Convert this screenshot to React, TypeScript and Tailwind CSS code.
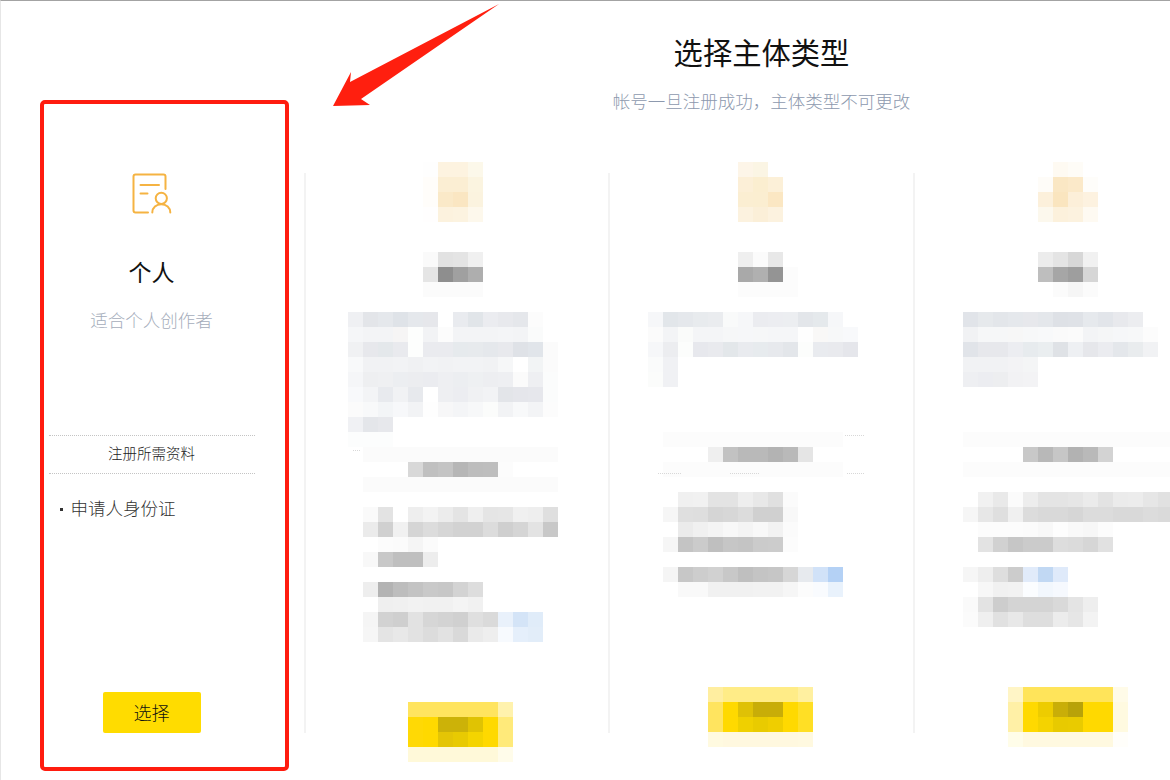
const FONT = "font-['Liberation_Sans','Noto_Sans_CJK_SC',sans-serif]";

// blurred patches, in page coordinates: [y, x, colours]
type Patch = [number, number, string];

const C1: Patch[] = [
  [162, 423, 'fefefe fdf3e0 fdf3e0 fcf8ea'],
  [177, 423, 'fffdfa fbeed3 fbeed3 fbf4e0'],
  [192, 423, 'fffdfa fae9c8 fae6c2 fbf3df'],
  [207, 423, 'fffefe fcf2de fcf3e0 fdf8ec'],
  [252, 423, 'fafafa e2e2e2 e4e4e4 f0f0f0'],
  [267, 423, 'e5e5e5 8e8e8e a0a0a0 aeaeae'],
  [282, 423, 'fbfbfb fbfbfb fbfbfb fbfbfb'],
  [312, 348, 'eff0f3 e3e5e9 e5e8ec dfe3e8 e5e8ec e6e7eb ffffff e9ebef e1e5e9 ebecf0 e8e9ed e5e7eb fcfcfc'],
  [327, 348, 'f5f6f8 f3f4f6 f3f4f6 f6f5f5 fdfefd f2f3f5 fcfcfc f3f4f6 f3f4f6 f3f4f6 f4f5f7 f3f4f6 fafbfb'],
  [342, 348, 'f0f1f3 e7e8ec e4e8eb e9eaee fdfefd eaebef eaebef e6eaed e7eaed e5e8ec e8e9ed dfe2e7 e1e5ea fbfbfb'],
  [357, 348, 'f8f9fa f1f2f4 f1f2f4 f2f3f5 f0f1f3 f2f3f5 f1f2f4 f2f3f5 f2f3f5 f1f2f4 f6f7f8 ffffff f2f4f5 fbfbfb'],
  [372, 348, 'f5f6f8 eeeff1 eff0f2 eceef1 ecedf0 ebecf0 eeeff2 eceef1 eef0f2 edeef1 eeeff2 fbfbfb eeeff2 fbfcfc'],
  [387, 348, 'f8f9fb f3f4f6 e8eaee f1f2f4 e7e9ed ffffff eeeff2 ecedf1 f0f1f3 f2f3f5 e3e5e9 e5e6eb e6e7ec fbfcfc'],
  [402, 348, 'fbfbfb f8f9fa f3f5f7 f7f8fa f2f3f5 fefefe f7f7f8 f4f5f7 f7f8f9 fbfcfb f2f3f5 f8f9fa f3f4f6 fcfcfc'],
  [417, 348, 'f0f1f4 e4e6ea e7e8ec'],
  [432, 348, 'fcfdfd fcfdfd fcfdfd'],
  [447, 363, 'fbfbfb fbfbfb fbfbfb fbfbfb fbfbfb fbfbfb fbfbfb fbfbfb fbfbfb fbfbfb fbfbfb fbfbfb fbfbfb'],
  [462, 408, 'd8d8d8 c0c0c0 c4c4c4 b6b6b6 bdbdbd bebebe fcfcfc'],
  [477, 363, 'fbfbfb fbfbfb fbfbfb fbfbfb fbfbfb fbfbfb fbfbfb fbfbfb fbfbfb fbfbfb fbfbfb fbfbfb fbfbfb'],
  [507, 363, 'fafafa e3e3e3 ffffff eeeeee f3f3f3 ececec e4e4e4 efefef e5e5e5 e6e6e6 f0f0f0 eeeeee dfdfdf'],
  [522, 363, 'ebebeb d0d0d0 f1f1f1 d5d5d5 dcdcdc d6d6d6 d2d2d2 d2d2d2 dcdcdc cfcfcf d5d5d5 e3e3e3 c8c8c8'],
  [537, 378, 'fcfcfc fbfbfb f5f5f5 fbfbfb'],
  [552, 363, 'f8f8f8 c8c8c8 bfbfbf bfbfbf ededed'],
  [582, 363, 'eeeeee b3b3b3 bdbdbd c3c3c3 c9c9c9 c7c7c7 d3d3d3 dddddd'],
  [597, 378, 'efefef f0f0f0 f2f2f2 f1f1f1 f1f1f1 f4f4f4 f1f1f1'],
  [612, 363, 'f5f5f5 d2d2d2 cfcfcf e2e2e2 d6d6d6 d3d3d3 d0d0d0 dfdfdf dadada e9f1fb d4e4f7 e0ecf9'],
  [627, 363, 'f6f6f6 e4e4e4 e8e8e8 e2e2e2 dcdcdc e2e2e2 d9d9d9 eaeaea eeeeee f7fafe e5effb e2edf9'],
  [702, 408, 'ffe45f ffe45f ffe45f ffe45f ffe45f ffe45f fff2ad'],
  [717, 408, 'ffd905 ffd900 ccb208 ccb208 e0c303 ffd900 ffea7a'],
  [732, 408, 'ffd905 ffd900 e4c505 e8ca02 f4d400 ffd900 ffea7a'],
  [747, 408, 'fff9d9 fff9d9 fff9d9 fff9d9 fff9d9 fff9d9 fffcea'],
];

const C2: Patch[] = [
  [162, 738, 'fdf5e8 fbf5e4'],
  [177, 738, 'fcefd7 fbeed0 fcf0d8'],
  [192, 738, 'fbeed2 fbeed1 fbe7c3'],
  [207, 738, 'fcf2df fbefd8 fcf2df'],
  [252, 738, 'efefef fbfbfb e8e8e8'],
  [267, 738, 'a9a9a9 b0b0b0 949494 fcfcfc'],
  [282, 738, 'fcfcfc fcfcfc fcfcfc fcfcfc'],
  [312, 648, 'f6f7f9 e2e6ea e5e8ec e8ebee eaecef f9fafa f6f7f9 ebecf0 ecedf1 eceef1 e3e6ea e5e9ec f6f7f9'],
  [327, 648, 'fbfbfb f3f4f6 fafbfa f4f5f7 f4f5f7 f6f7f8 f6f7f9 f6f7f8 f5f6f8 f5f6f8 fefefe f9f8f7 f7f8f9 f8f9fb'],
  [342, 648, 'f6f7f9 ecedf0 fcfdfc e7e8ed e9eaee e3e7ea e9ebef e7ebee e7e9ed e3e6ea fcfdfc e9ebef e9eaee e5e6eb'],
  [357, 648, 'fafbfb f0f1f4'],
  [372, 648, 'fbfcfb f0f1f4'],
  [432, 663, 'fcfcfc fcfcfc fcfcfc fcfcfc fcfcfc fcfcfc fcfcfc fcfcfc fcfcfc fcfcfc fcfcfc fcfcfc'],
  [447, 708, 'efefef c2c2c2 b9b9b9 b9b9b9 b3b3b3 b9b9b9 e5e5e5'],
  [462, 663, 'fcfcfc fcfcfc fcfcfc fcfcfc fcfcfc fcfcfc fcfcfc fcfcfc fcfcfc fcfcfc fcfcfc fcfcfc'],
  [492, 678, 'f0f0f0 f1f1f1 e3e3e3 e3e3e3 eeeeee e8e8e8 e0e0e0 fbfbfb'],
  [507, 663, 'f6f6f6 dfdfdf dedede d5d5d5 d7d7d7 dcdcdc d0d0d0 d0d0d0 f8f8f8'],
  [522, 678, 'ebebeb f0f0f0 f4f4f4 f8f8f8 f4f4f4 f8f8f8 f2f2f2 fbfbfb'],
  [537, 663, 'f6f6f6 c4c4c4 cbcbcb bfbfbf c6c6c6 c4c4c4 cbcbcb cccccc fcfcfc'],
  [567, 663, 'f5f5f5 c7c7c7 cdcdcd d1d1d1 c8c8c8 bfbfbf c4c4c4 c6c6c6 d6d6d6 e7eaee d1e2f8 b4d1f5'],
  [582, 678, 'f9f9f9 f9f9f9 f1f1f1 f1f1f1 f1f1f1 f2f2f2 f2f2f2 f6f6f6 fcfcfc f9fbfe e9f2fc'],
  [687, 708, 'ffeea0 ffec87 ffec87 ffec87 ffec87 ffec87 fff0a0'],
  [702, 708, 'ffe45f ffd900 dfc106 c8ad08 c8ad08 ffd900 ffdf25'],
  [717, 708, 'ffe45f ffd900 efd000 e9cb00 efce00 ffd900 ffdf25'],
  [732, 708, 'fffae0 fff8df fff8df fff8df fff8df fff8df fff9e0'],
];

const C3: Patch[] = [
  [162, 1053, 'fefaf2 fefcf7'],
  [177, 1038, 'fefcf8 fae7c4 fbe9c9 fefdfa'],
  [192, 1038, 'fcf0db fae5bf fcefd9 fdf2e0'],
  [207, 1038, 'fcf8ed fcf1dc fcf2df fefaf2'],
  [252, 1038, 'ececec e4e4e4 d7d7d7 f1f1f1'],
  [267, 1038, 'bebebe a6a6a6 9e9e9e d6d6d6'],
  [282, 1053, 'fbfbfb f6f6f6 fbfbfb'],
  [312, 963, 'e1e4e9 e6e9ec e3e6ea e5e8ec e7e8ec e4e7eb dee1e6 dfe2e7 e6e9ed e2e5ea e8e9ed ecedf0'],
  [327, 963, 'f1f2f4 f6f7f8 f6f7f8 f7f7f7 f7f8f9 f8f9fa fafafa fbfbfb f3f4f6 f5f6f7 f6f7f9 f7f8f9 fcfcfc'],
  [342, 963, 'e1e4e9 e7e8ec e7e8ec ecedf1 e7ebee eaeef0 dfe2e6 eef0f3 e6e7eb ebecf0 e4e7eb e9ecee f1f2f4'],
  [357, 963, 'f1f2f4 f1f2f4 f1f2f4 f3f3f5 f4f5f6'],
  [372, 963, 'eeeff2 ecedf1 edeef0 f2f2f4 f3f3f5'],
  [432, 963, 'fcfcfc fcfcfc fcfcfc fcfcfc fcfcfc fcfcfc fcfcfc fcfcfc fcfcfc fcfcfc fcfcfc fcfcfc fcfcfc fcfcfc'],
  [447, 1023, 'c8c8c8 b8b8b8 c6c6c6 b2b2b2 b9b9b9 d3d3d3'],
  [462, 963, 'fcfcfc fcfcfc fcfcfc fcfcfc fcfcfc fcfcfc fcfcfc fcfcfc fcfcfc fcfcfc fcfcfc fcfcfc fcfcfc fcfcfc'],
  [492, 978, 'f1f1f1 e9e9e9 fbfbfb ededed e4e4e4 e4e4e4 e6e6e6 ebebeb e3e3e3 ebebeb ececec e6e6e6 e1e1e1'],
  [507, 963, 'f6f6f6 e7e7e7 dfdfdf f0f0f0 dcdcdc d9d9d9 d9d9d9 d6d6d6 dcdcdc dcdcdc d9d9d9 d9d9d9 dcdcdc dadada'],
  [522, 978, 'fcfcfc fcfcfc fcfcfc fbfbfb f8f8f8 fdfdfd f9f9f9 f7f7f7 fcfcfc'],
  [537, 978, 'e3e3e3 d1d1d1 c6c6c6 cbcbcb cbcbcb dddddd dbdbdb d6d6d6 e1e1e1'],
  [567, 963, 'f6f6f6 eeeeee dedede cccccc e1ebfa c1d8f3 dfeafa'],
  [582, 978, 'f7f7f7 f1f1f1 f2f2f2 fbfdff f2f7fd f6f9fe'],
  [597, 963, 'fafafa e3e3e3 cdcdcd d4d4d4 d4d4d4 d4d4d4 d9d9d9 e4e4e4 eeeeee'],
  [612, 963, 'fbfbfb efefef e1e1e1 e8e8e8 dedede dedede ececec e6e6e6 f3f3f3'],
  [687, 1008, 'fff5c6 ffe45a ffe45a ffe45a ffe45a ffe45a ffe45a fffbe8'],
  [702, 1008, 'fff0a6 ffd900 edcc00 c9ae08 b8a209 ffd900 ffd900 fffae0'],
  [717, 1008, 'fff0a6 ffd900 f4d300 e8ca00 e9cb00 ffd900 ffd900 fffae0'],
  [732, 1008, 'fffde9 fff9e0 fff9e0 fff9e0 fff9e0 fff9e0 fff9e0 fffefa'],
];

type MosaicProps = { left: number; width: number; patches: Patch[]; dots?: [number, number, number][] };

function Mosaic({ left, width, patches, dots = [] }: MosaicProps) {
  return (
    <svg
      width={width}
      height={618}
      viewBox={`${left} 162 ${width} 618`}
      shapeRendering="crispEdges"
      className="block shrink-0"
    >
      {patches.map(([y, x, colours]) =>
        colours
          .split(' ')
          .map((c, i) => <rect key={`${y}-${i}`} x={x + i * 15} y={y} width={15} height={15} fill={`#${c}`} />),
      )}
      {dots.map(([y, x1, x2]) => (
        <line key={`${y}-${x1}`} x1={x1} x2={x2} y1={y + 0.5} y2={y + 0.5} stroke="#d8d8d8" strokeDasharray="1 1" />
      ))}
    </svg>
  );
}

function Divider() {
  return <div className="mt-[11px] h-[560px] w-[2px] shrink-0 bg-[#f3f3f3]" />;
}

function DocPersonIcon() {
  return (
    <svg width="40" height="41" viewBox="132 172 40 41" fill="none" stroke="#f5b342" strokeWidth="2" strokeLinecap="round">
      <path d="M148 211.500H135.500a2 2 0 0 1-2-2V175.500a2 2 0 0 1 2-2H163.500a2 2 0 0 1 2 2V188" />
      <path d="M140.500 184H159" />
      <path d="M140.500 192.500H147.500" />
      <circle cx="161.300" cy="197.300" r="5.600" />
      <path d="M152.300 211.500c0-5 4-8.300 9-8.300s9 3.300 9 8.300" />
    </svg>
  );
}

function DottedRule() {
  return <div className="h-px border-t border-dotted border-[#c4c4c4]" />;
}

function PersonalCard() {
  return (
    <div className="flex h-[671px] w-[249px] shrink-0 flex-col items-center rounded-[5px] border-[4px] border-[#ff1c0f] pt-[69px] pr-[26px]">
      <DocPersonIcon />
      <h3 className="mt-[39px] text-[23px] leading-[40px] text-[#111]">个人</h3>
      <p className="mt-[15px] text-[17.5px] leading-[26px] font-light text-[#a5adbb]">适合个人创作者</p>
      <div className="mt-[101px] w-[206px]">
        <DottedRule />
        <p className="h-[37px] text-center text-[14.5px] leading-[37px] font-light text-[#222]">注册所需资料</p>
        <DottedRule />
        <ul className="mt-[22px] pl-[11px]">
          <li className="flex items-center text-[17.5px] leading-[26px] font-light text-[#333]">
            <span className="mr-[8px] h-[3px] w-[3px] bg-[#333]" />
            申请人身份证
          </li>
        </ul>
      </div>
      <button className="mt-auto mb-[34px] h-[41px] w-[98px] rounded-[2px] bg-[#ffdc00] pt-[4px] text-[18px] font-light text-[#111]">
        选择
      </button>
    </div>
  );
}

export default function App() {
  return (
    <div className={`${FONT} relative flex h-[780px] w-[1170px] overflow-hidden border-t border-l border-t-[#a3a3a3] border-l-[#e6e6e6] bg-white`}>
      <div className="shrink-0 pt-[99px] pl-[39px]">
        <PersonalCard />
      </div>

      <div className="ml-[15px] flex min-w-0 flex-1 flex-col">
        <header className="pt-[32px] pl-[49px] text-center">
          <h1 className="text-[29.3px] leading-[42px] font-normal text-[#111]">选择主体类型</h1>
          <p className="mt-[14px] text-[17.5px] leading-[26px] font-light text-[#8d99ae]">
            帐号一旦注册成功，主体类型不可更改
          </p>
        </header>
        <div className="mt-[47px] flex">
          <Divider />
          <Mosaic left={306} width={302} patches={C1} dots={[[450, 353, 360]]} />
          <Divider />
          <Mosaic left={610} width={303} patches={C2} dots={[[435, 845, 865], [473, 658, 682], [473, 730, 760], [473, 847, 865]]} />
          <Divider />
          <Mosaic left={915} width={255} patches={C3} />
        </div>
      </div>

      {/* the red arrow pasted over the screenshot */}
      <svg className="absolute top-[-1px] left-[-1px]" width="520" height="120" viewBox="0 0 520 120">
        <polygon points="333,106 351,72 350,82 499,4 361,99 370,105" fill="#ff1f0f" />
      </svg>
    </div>
  );
}
